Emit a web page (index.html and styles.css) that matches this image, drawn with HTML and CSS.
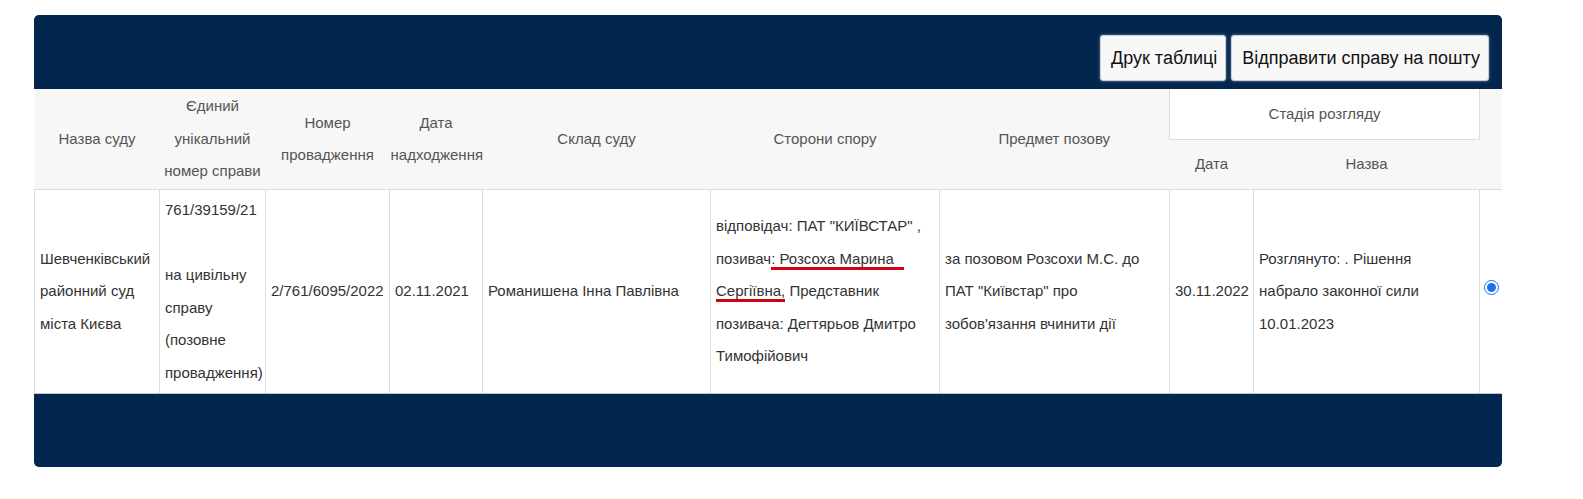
FILE: index.html
```html
<!DOCTYPE html>
<html lang="uk">
<head>
<meta charset="utf-8">
<title>Справи</title>
<link rel="stylesheet" href="styles.css">
</head>
<body>
<div class="page">
  <div class="panel">
    <div class="toolbar">
      <button class="btn">Друк таблиці</button>
      <button class="btn">Відправити справу на пошту</button>
    </div>
    <table class="cases">
      <colgroup>
        <col class="c1"><col class="c2"><col class="c3"><col class="c4"><col class="c5">
        <col class="c6"><col class="c7"><col class="c8"><col class="c9"><col class="c10">
      </colgroup>
      <thead>
        <tr class="hrow1">
          <th rowspan="2">Назва суду</th>
          <th rowspan="2">Єдиний унікальний номер справи</th>
          <th rowspan="2">Номер провадження</th>
          <th rowspan="2">Дата надходження</th>
          <th rowspan="2">Склад суду</th>
          <th rowspan="2">Сторони спору</th>
          <th rowspan="2">Предмет позову</th>
          <th colspan="2" class="stage">Стадія розгляду</th>
          <th rowspan="2"></th>
        </tr>
        <tr class="hrow2">
          <th>Дата</th>
          <th>Назва</th>
        </tr>
      </thead>
      <tbody>
        <tr>
          <td>Шевченківський районний суд міста Києва</td>
          <td>761/39159/21<br><br>на цивільну справу (позовне провадження)</td>
          <td>2/761/6095/2022</td>
          <td>02.11.2021</td>
          <td>Романишена Інна Павлівна</td>
          <td>відповідач: ПАТ "КИЇВСТАР" ,<br>позивач<span class="mark mark-wide">: Розсоха Марина</span><br><span class="mark">Сергіївна,</span> Представник<br>позивача: Дегтярьов Дмитро<br>Тимофійович</td>
          <td>за позовом Розсохи М.С. до<br>ПАТ "Київстар" про<br>зобов'язання вчинити дії</td>
          <td>30.11.2022</td>
          <td>Розглянуто: . Рішення<br>набрало законної сили<br>10.01.2023</td>
          <td class="pick"><input type="radio" name="case" checked></td>
        </tr>
      </tbody>
    </table>
    <div class="footer"></div>
  </div>
</div>
</body>
</html>
```
FILE: styles.css
```css
html, body {
  margin: 0;
  padding: 0;
  background: #ffffff;
}

.page {
  padding: 15px 0 0 34px;
  font-family: "Liberation Sans", Arial, sans-serif;
}

.panel {
  width: 1468px;
  border-radius: 5px;
  overflow: hidden;
  background: #ffffff;
}

.toolbar {
  height: 74px;
  background: #02264d;
  display: flex;
  justify-content: flex-end;
  align-items: flex-start;
  gap: 5px;
  padding: 20px 13px 0 0;
  box-sizing: border-box;
}

.btn {
  height: 46px;
  padding: 0 8px 0 10px;
  font-family: "Liberation Sans", Arial, sans-serif;
  font-size: 18px;
  color: #111111;
  background: #f8f8f8;
  border: 1px solid #c9ced6;
  border-radius: 3px;
  box-shadow: 0 0 3px rgba(200, 210, 225, 0.6);
  cursor: pointer;
}

.cases {
  width: 1468px;
  table-layout: fixed;
  border-collapse: collapse;
  font-size: 15px;
  line-height: 32.5px;
}

.c1 { width: 125px; }
.c2 { width: 106px; }
.c3 { width: 124px; }
.c4 { width: 93px; }
.c5 { width: 228px; }
.c6 { width: 229px; }
.c7 { width: 230px; }
.c8 { width: 84px; }
.c9 { width: 226px; }
.c10 { width: 23px; }

.cases thead th {
  background: #f7f7f7;
  color: #555555;
  font-weight: normal;
  text-align: center;
  vertical-align: middle;
  padding: 0 1px;
}

.hrow1 th {
  height: 50px;
}

.hrow2 th {
  height: 49px;
  border-bottom: 1px solid #dddddd;
}

.hrow1 th[rowspan] {
  border-bottom: 1px solid #dddddd;
}

.cases thead th.stage {
  background: #ffffff;
  border: 1px solid #dddddd;
  border-top: none;
}

.cases tbody td {
  color: #333333;
  vertical-align: middle;
  padding: 4px 5px;
  border: 1px solid #dddddd;
  border-top: none;
  border-bottom: none;
  overflow: visible;
}

.cases tbody td.pick {
  padding: 0;
  text-align: center;
}

.pick input {
  display: block;
  margin: 0 auto 8px;
  width: 15px;
  height: 15px;
  accent-color: #1a73e8;
}

.mark {
  padding-bottom: 3px;
  background: linear-gradient(#d4000f, #d4000f) left bottom / 100% 3px no-repeat;
}

.mark-wide {
  padding-right: 10px;
}

.footer {
  height: 73px;
  background: #02264d;
  border-top: 1px solid #b9c6d6;
}
```
